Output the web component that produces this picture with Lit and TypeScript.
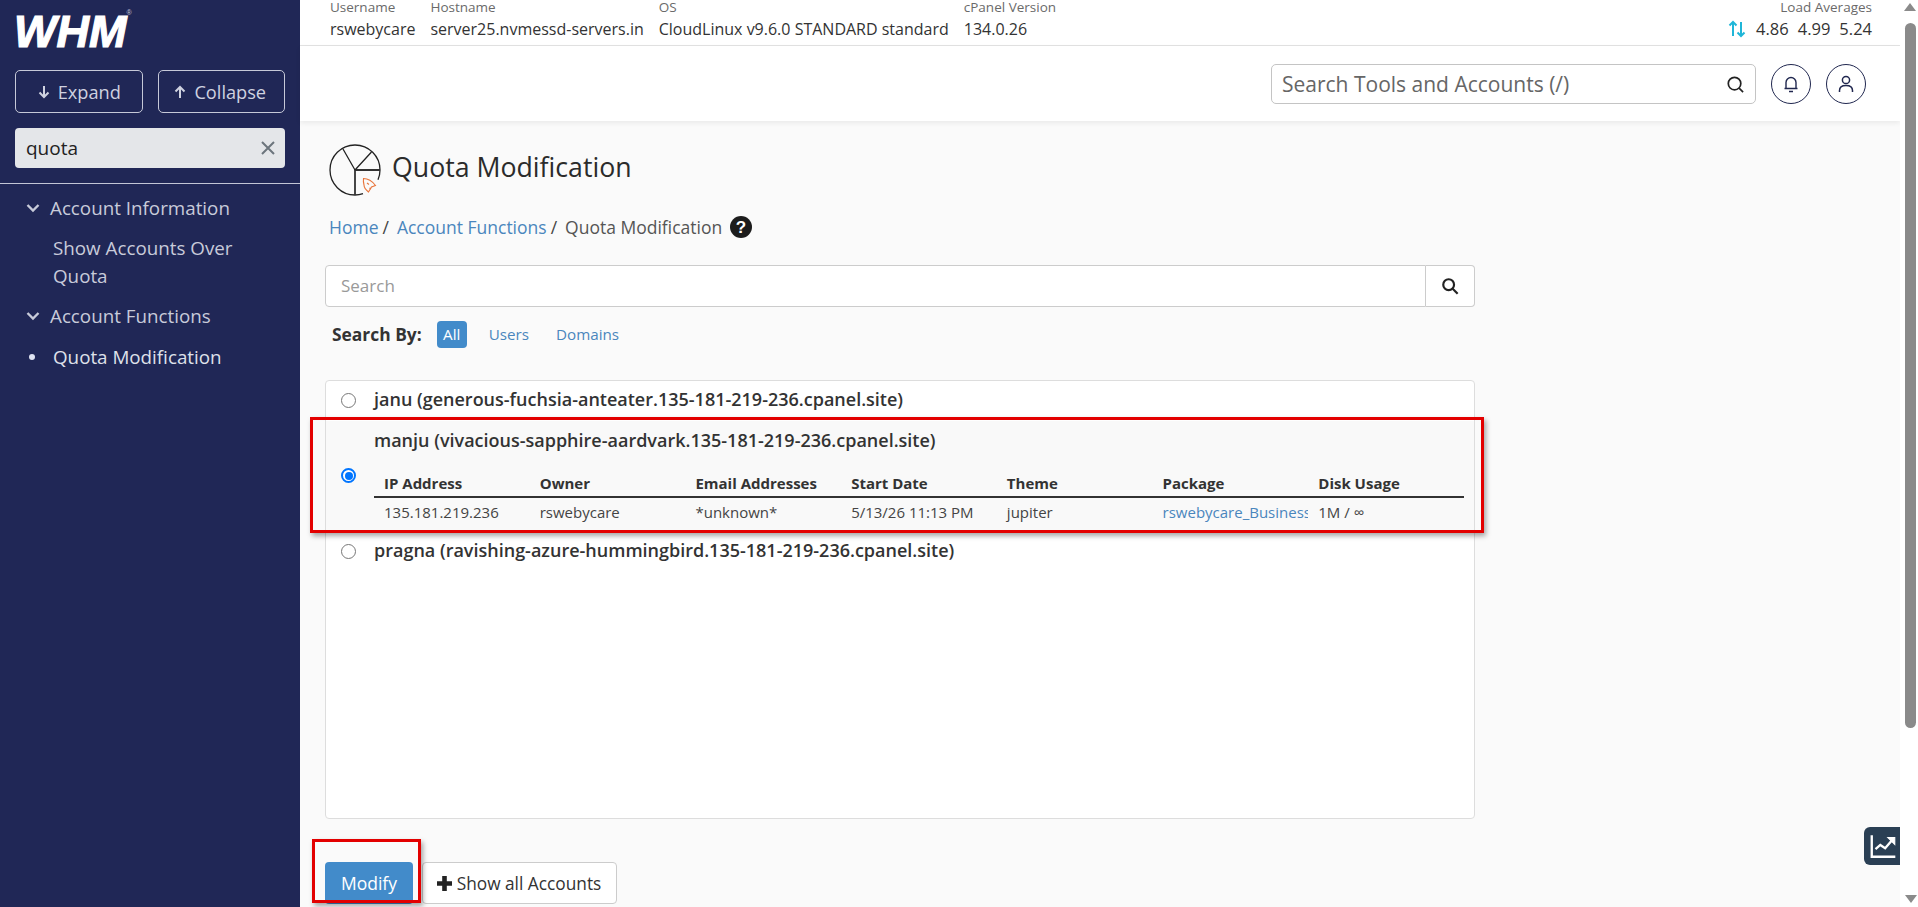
import { LitElement, html, css, svg } from "lit";
import { customElement } from "lit/decorators.js";

const arrow = (up: boolean) => html`<svg class="btn-ico" viewBox="0 0 14 14" fill="none" stroke="currentColor" stroke-width="2">
  ${up
    ? svg`<path d="M7 13V2M2.5 6.5 7 2l4.5 4.5"></path>`
    : svg`<path d="M7 1v11M2.5 7.5 7 12l4.5-4.5"></path>`}
</svg>`;
const chevron = html`<svg class="chev" viewBox="0 0 14 10" fill="none" stroke="currentColor" stroke-width="2.4"><path d="M1.5 2 7 7.5 12.5 2"></path></svg>`;

@customElement("app-root")
export class AppRoot extends LitElement {
  static styles = css`
    :host { display: block; width: 1918px; height: 907px; overflow: hidden; font-family: "Open Sans", "Liberation Sans", sans-serif; color: #333; background: #fafafa; }
    * { box-sizing: border-box; }
    .app { display: flex; height: 907px; }

    /* Sidebar */
    .side { flex: 0 0 300px; background: #202756; color: #d5d7e3; display: flex; flex-direction: column; }
    .logo { height: 70px; padding: 9px 0 0 14px; font: italic 900 45px/46px "Liberation Sans", sans-serif; color: #fff; letter-spacing: 0; }
    .logo-text { display: inline-block; -webkit-text-stroke: 1.2px #fff; }
    .logo sup { font: 400 7px/7px "Liberation Sans", sans-serif; letter-spacing: 0; vertical-align: top; margin-left: 0; color: #ccd; -webkit-text-stroke: 0; }
    .side-btns { display: flex; gap: 15px; padding: 0 15px; }
    .side-btn { flex: 0 0 127.5px; height: 43px; border: 1px solid #c6c9d8; border-radius: 5px; display: flex; align-items: center; justify-content: center; gap: 7px; font-size: 18.2px; color: #cfd2e0; }
    .side-btn.up { padding-right: 3px; }
    .btn-ico { width: 14px; height: 14px; flex: none; }
    .filter { margin: 15px 15px 0; height: 40px; background: #e4e6e9; border-radius: 4px; display: flex; align-items: center; justify-content: space-between; padding: 0 10px 0 11px; font-size: 19px; color: #222; }
    .filter svg { width: 14px; height: 14px; }
    .side hr { margin: 15px 0 0; border: 0; border-top: 1px solid #c2c6d6; height: 0; width: 100%; }
    .nav { padding: 10px 0 0; font-size: 18.8px; line-height: 28px; color: #c8cbda; }
    .group { display: flex; align-items: center; height: 28px; padding-left: 26px; gap: 10px; }
    .chev { width: 14px; height: 10px; flex: none; }
    .group.second { margin-top: 12px; }
    .item { padding: 12px 30px 0 53px; }
    .item.active { padding-top: 13px; color: #dfe1ea; display: flex; align-items: center; }
    .dot { width: 6px; height: 6px; background: #dfe3f2; border-radius: 50%; margin-left: -24px; margin-right: 18px; flex: none; }

    /* Main */
    .main { flex: 1; min-width: 0; display: flex; flex-direction: column; }
    .stats { height: 46px; background: #fff; border-bottom: 1px solid #e3e3e3; display: flex; justify-content: space-between; padding: 0 28px 0 30px; }
    .stat-cols { display: flex; gap: 15px; }
    .stat-label { font-size: 13.5px; line-height: 14px; color: #6a6a6a; }
    .stat-val { font-size: 16px; line-height: 22px; margin-top: 4px; color: #333; }
    .stat-right { text-align: right; }
    .loads { display: flex; justify-content: flex-end; align-items: center; gap: 9px; font-size: 16.5px; }
    .loads svg { width: 18px; height: 18px; margin-right: 1px; }
    .searchbar { height: 75px; background: #fff; display: flex; align-items: flex-start; justify-content: flex-end; gap: 15px; padding: 18px 34px 0 0; box-shadow: 0 2px 5px rgba(0,0,0,.07); position: relative; }
    .tool-search { width: 485px; height: 40px; border: 1px solid #c4c4c4; border-radius: 5px; display: flex; align-items: center; justify-content: space-between; padding: 0 10px; font-size: 21px; color: #666; }
    .tool-search svg { width: 19px; height: 19px; }
    .round { width: 40px; height: 40px; border: 1px solid #20274f; border-radius: 50%; display: flex; align-items: center; justify-content: center; }
    .round svg { width: 20px; height: 20px; }
    .content { flex: 1; padding: 23px 0 0 25px; position: relative; min-height: 0; }
    .title { display: flex; align-items: center; gap: 11px; padding-left: 4px; height: 52px; }
    .title svg { width: 52px; height: 52px; flex: none; }
    .title h1 { margin: -6px 0 0; font-size: 26.7px; font-weight: 500; color: #2b2b2b; line-height: 34px; }
    .crumbs { display: flex; align-items: center; padding-left: 4px; margin-top: 19px; font-size: 17.5px; height: 24px; color: #555; }
    .crumbs a { color: #4a86bd; }
    .crumbs i { font-style: normal; color: #444; margin: 0 8px 0 4px; }
    .crumbs svg { width: 22px; height: 22px; margin-left: 8px; }
    .acct-search { display: flex; width: 1150px; height: 42px; margin-top: 26px; }
    .acct-input { flex: 1; background: #fff; border: 1px solid #ccc; border-radius: 4px 0 0 4px; display: flex; align-items: center; padding: 0 0 1px 15px; font-size: 17px; color: #999; }
    .acct-go { width: 49px; border: 1px solid #ccc; border-left: 0; border-radius: 0 4px 4px 0; background: #fff; display: flex; align-items: center; justify-content: center; }
    .acct-go svg { width: 18px; height: 18px; }
    .by { display: flex; align-items: center; height: 27px; margin-top: 14px; padding: 0 0 1px 7px; font-size: 15.2px; }
    .by b { font-size: 17.4px; font-weight: 700; color: #333; margin-right: 15px; }
    .by span { color: #4a86bd; margin-right: 27px; }
    .by .on { background: #428bca; color: #fff; border-radius: 4px; width: 30px; height: 27px; display: flex; align-items: center; justify-content: center; margin-right: 22px; }
    .list { position: relative; width: 1150px; height: 439px; margin-top: 32px; background: #fff; border: 1px solid #ddd; border-radius: 4px; }
    .row { display: flex; align-items: center; padding: 0 10px 0 15px; height: 38px; }
    .row.sel { height: 111px; background: #f9f9f9; align-items: flex-start; margin-top: 2px; }
    .radio { width: 15px; height: 15px; border: 1px solid #777; border-radius: 50%; background: #fff; flex: none; margin-right: 18px; }
    .radio.on { border: 2px solid #0075ff; position: relative; margin-top: 47px; }
    .radio.on::after { content: ""; position: absolute; inset: 1.5px; background: #0075ff; border-radius: 50%; }
    .row-name { font-size: 18px; font-weight: 600; color: #333; line-height: 24px; padding-bottom: 2px; }
    .row-body { flex: 1; min-width: 0; padding-top: 7px; }
    .row-body .row-name { padding-bottom: 0; }
    .table { display: grid; grid-template-columns: repeat(7, minmax(0, 1fr)); margin-top: 20px; font-size: 15px; }
    .th { font-weight: 700; color: #333; padding: 0 10px; height: 26px; line-height: 22px; border-bottom: 2px solid #333; }
    .td { padding: 0 10px; height: 30px; line-height: 28px; color: #444; overflow: hidden; white-space: nowrap; }
    .td a { color: #4a86bd; }
    .annot { position: absolute; border: 3px solid #e30000; box-shadow: 2px 3px 5px rgba(0,0,0,.35); pointer-events: none; }
    .annot.a1 { left: -16px; top: 36px; width: 1174px; height: 116px; }
    .actions { position: relative; display: flex; gap: 9px; margin-top: 43px; height: 42px; }
    .btn { height: 42px; border-radius: 4px; display: flex; align-items: center; justify-content: center; font-size: 17.5px; }
    .btn.primary { width: 88px; background: #428bca; color: #fff; }
    .btn.plain { width: 195px; background: #fff; border: 1px solid #ccc; color: #333; gap: 4px; font-size: 17.3px; padding-right: 2px; }
    .btn.plain svg { width: 17px; height: 17px; }
    .annot.a2 { left: -13px; top: -23px; width: 109px; height: 64px; }
    .chart { position: absolute; right: -1px; bottom: 42px; width: 37px; height: 38px; background: #2a3f54; border-radius: 6px 0 0 6px; display: flex; align-items: center; justify-content: center; }
    .chart svg { width: 30px; height: 30px; }

    /* Scrollbar */
    .scroll { flex: 0 0 18px; background: #fff; display: flex; flex-direction: column; align-items: flex-start; position: relative; padding: 23px 0 0 5px; }
    .thumb { width: 11px; height: 705px; background: #8a8a8a; border-radius: 6px; }
    .tri { position: absolute; left: 4px; width: 0; height: 0; border-left: 6px solid transparent; border-right: 6px solid transparent; }
    .tri.up { top: 3px; border-bottom: 8px solid #8a8a8a; }
    .tri.down { bottom: 4px; left: 5px; border-top: 8px solid #8a8a8a; }
  `;

  render() {
    const cols = ["IP Address", "Owner", "Email Addresses", "Start Date", "Theme", "Package", "Disk Usage"];
    return html`<div class="app">
      <aside class="side">
        <div class="logo"><span class="logo-text">WHM</span><sup>®</sup></div>
        <div class="side-btns">
          <div class="side-btn">${arrow(false)}<span>Expand</span></div>
          <div class="side-btn up">${arrow(true)}<span>Collapse</span></div>
        </div>
        <div class="filter"><span>quota</span>
          <svg viewBox="0 0 14 14" fill="none" stroke="#6c757d" stroke-width="2"><path d="M1 1l12 12M13 1 1 13"></path></svg>
        </div>
        <hr />
        <nav class="nav">
          <div class="group">${chevron}<span>Account Information</span></div>
          <div class="item">Show Accounts Over Quota</div>
          <div class="group second">${chevron}<span>Account Functions</span></div>
          <div class="item active"><span class="dot"></span><span>Quota Modification</span></div>
        </nav>
      </aside>
      <div class="main">
        <div class="stats">
          <div class="stat-cols">
            <div><div class="stat-label">Username</div><div class="stat-val">rswebycare</div></div>
            <div><div class="stat-label">Hostname</div><div class="stat-val">server25.nvmessd-servers.in</div></div>
            <div><div class="stat-label">OS</div><div class="stat-val">CloudLinux v9.6.0 STANDARD standard</div></div>
            <div><div class="stat-label">cPanel Version</div><div class="stat-val">134.0.26</div></div>
          </div>
          <div class="stat-right">
            <div class="stat-label">Load Averages</div>
            <div class="stat-val loads">
              <svg viewBox="0 0 18 18" fill="none" stroke="#1fb6d8" stroke-width="2"><path d="M5 16V2M1.5 5.5 5 2l3.5 3.5M13 2v14M9.5 12.5 13 16l3.5-3.5"></path></svg>
              <span>4.86</span><span>4.99</span><span>5.24</span>
            </div>
          </div>
        </div>
        <div class="searchbar">
          <div class="tool-search"><span>Search Tools and Accounts (/)</span>
            <svg viewBox="0 0 20 20" fill="none" stroke="#222" stroke-width="1.8"><circle cx="9" cy="9" r="6.6"></circle><path d="M13.8 13.8 18 18"></path></svg>
          </div>
          <div class="round"><svg viewBox="0 0 20 20" fill="none" stroke="#20274f" stroke-width="1.4"><path d="M5 14.5V8.5a5 5 0 0 1 10 0v6M3.5 14.5h13M8 17.5h4"></path></svg></div>
          <div class="round"><svg viewBox="0 0 20 20" fill="none" stroke="#20274f" stroke-width="1.5"><circle cx="10" cy="6" r="3.6"></circle><path d="M3.5 18v-1.5c0-3 2.5-5 6.5-5s6.5 2 6.5 5V18"></path></svg></div>
        </div>
        <div class="content">
          <div class="title">
            <svg viewBox="0 0 52 52" fill="none" stroke="#222" stroke-width="1.3">
              <path d="M49 35.8A25 25 0 0 0 51 26A25 25 0 1 0 26 51A25 25 0 0 0 34 49.7"></path>
              <path d="M26 51V26H51" stroke="#333" stroke-width="1.8"></path>
              <path d="M26 26 14 5M26 26 42.5 8"></path>
              <g stroke="#e8743b" stroke-width="1.1">
                <path d="M34.5 34.5c4.5 0 9 3 12 7l-4 1.5-3 5c-2.5-2-4.5-5-4.5-7-.5-2-.8-4.500-.5-6.500z"></path>
                <path d="M38 39l2 1.5M40.5 44l1.5 1"></path>
              </g>
            </svg>
            <h1>Quota Modification</h1>
          </div>
          <div class="crumbs">
            <a>Home</a><i>/</i><a>Account Functions</a><i>/</i><span>Quota Modification</span>
            <svg viewBox="0 0 22 22"><circle cx="11" cy="11" r="11" fill="#1c1c1c"></circle><text x="11" y="17" text-anchor="middle" font-family="Liberation Sans, sans-serif" font-size="17" font-weight="700" fill="#fff">?</text></svg>
          </div>
          <div class="acct-search">
            <div class="acct-input">Search</div>
            <div class="acct-go"><svg viewBox="0 0 20 20" fill="none" stroke="#222" stroke-width="2.4"><circle cx="8.5" cy="8.5" r="6"></circle><path d="M13 13l5.5 5.5"></path></svg></div>
          </div>
          <div class="by"><b>Search By:</b><div class="on">All</div><span>Users</span><span>Domains</span></div>
          <div class="list">
            <div class="row"><div class="radio"></div><div class="row-name">janu (generous-fuchsia-anteater.135-181-219-236.cpanel.site)</div></div>
            <div class="row sel"><div class="radio on"></div>
              <div class="row-body">
                <div class="row-name">manju (vivacious-sapphire-aardvark.135-181-219-236.cpanel.site)</div>
                <div class="table">
                  ${cols.map((c) => html`<div class="th">${c}</div>`)}
                  <div class="td">135.181.219.236</div><div class="td">rswebycare</div><div class="td">*unknown*</div><div class="td">5/13/26 11:13 PM</div><div class="td">jupiter</div><div class="td"><a>rswebycare_Business</a></div><div class="td">1M / ∞</div>
                </div>
              </div>
            </div>
            <div class="row"><div class="radio"></div><div class="row-name">pragna (ravishing-azure-hummingbird.135-181-219-236.cpanel.site)</div></div>
            <div class="annot a1"></div>
          </div>
          <div class="actions">
            <div class="btn primary">Modify</div>
            <div class="btn plain"><svg viewBox="0 0 17 17"><path d="M6.2 1h4.6v5.2H16v4.6h-5.2V16H6.2v-5.2H1V6.2h5.2z" fill="#222"></path></svg><span>Show all Accounts</span></div>
            <div class="annot a2"></div>
          </div>
          <div class="chart"><svg viewBox="0 0 28 28" fill="none" stroke="#fff" stroke-width="2.2"><path d="M3.5 4v20h22"></path><path d="M7 17l4.5-4 4.5 3 6-7"></path><path d="M18.5 6h6.5v6.5z" fill="#fff" stroke-width="1"></path></svg></div>
        </div>
      </div>
      <div class="scroll"><div class="tri up"></div><div class="thumb"></div><div class="tri down"></div></div>
    </div>`;
  }
}
